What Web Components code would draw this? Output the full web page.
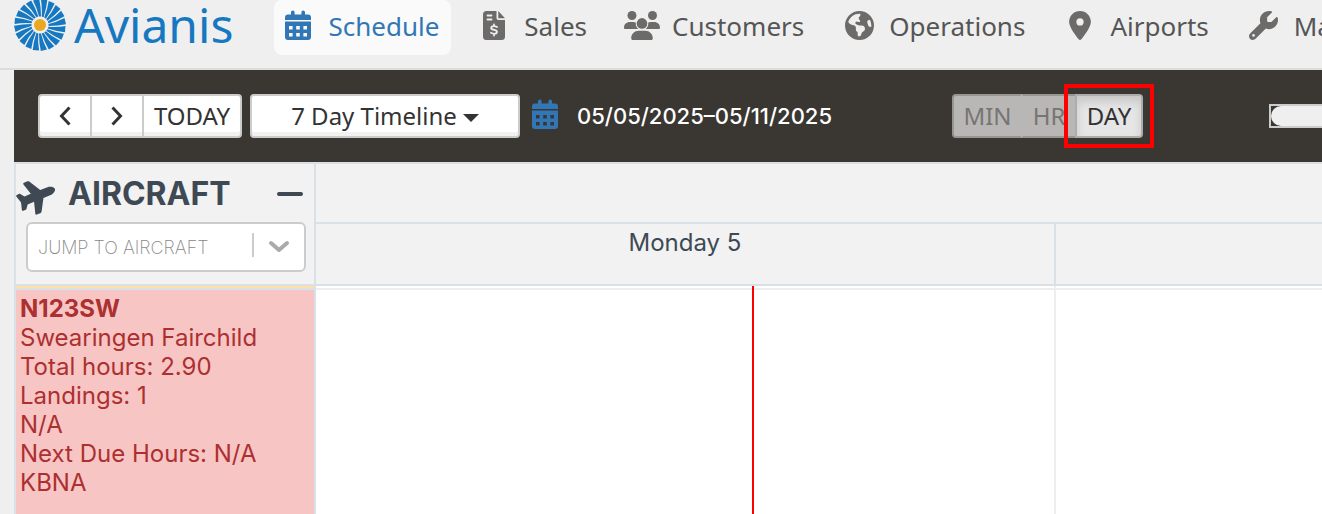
<!DOCTYPE html>
<html lang="en">
<head>
<meta charset="utf-8">
<meta name="viewport" content="width=device-width, initial-scale=1">
<title>Avianis Schedule</title>
<style>
html, body { margin: 0; height: 100%; overflow: hidden; background: #efefef; }
body { font-family: "Noto Sans", "Open Sans", sans-serif; font-size: 24px; color: #333; }
</style>
</head>
<body>
<av-app></av-app>

<script>
const define = (name, html, setup) => customElements.define(name, class extends HTMLElement {
  connectedCallback() {
    if (this.shadowRoot) return;
    const template = document.createElement('template');
    template.innerHTML = html;
    this.attachShadow({ mode: 'open' }).append(template.content.cloneNode(true));
    if (setup) setup(this, this.shadowRoot);
  }
});

const ICONS = {
  calendar: ['0 0 26 29', '<path fill-rule="evenodd" d="M6 1.300a1.300 1.300 0 0 1 3.600 0V3.500h6.800V1.300a1.300 1.300 0 0 1 3.600 0V3.500h3a3 3 0 0 1 3 3V9H0V6.500a3 3 0 0 1 3-3h3zM0 10.500h26V26a3 3 0 0 1-3 3H3a3 3 0 0 1-3-3zM4 15v3.400h3.600V15zm7.200 0v3.400h3.600V15zm7.200 0v3.400H22V15zM4 22v3.400h3.600V22zm7.200 0v3.400h3.600V22zm7.200 0v3.400H22V22z"/>'],
  sales: ['0 0 22 29', '<path fill-rule="evenodd" d="M3.500 0H13.500V7a2 2 0 0 0 2 2H22V25.500a3.500 3.500 0 0 1-3.500 3.500h-15A3.500 3.500 0 0 1 0 25.500v-22A3.500 3.500 0 0 1 3.500 0zM4.500 3.600a.9.9 0 0 0 0 1.800h4a.9.9 0 0 0 0-1.800zm0 4a.9.9 0 0 0 0 1.800h4a.9.9 0 0 0 0-1.800zM15.300 0 22 7.200h-6.700z"/><path fill="none" stroke="#efefef" stroke-width="1.800" stroke-linecap="round" d="M14 16c-1-.6-2-.9-3-.9-3.400 0-3.700 2.700-.8 3.500l1.800.5c3 .9 2.400 3.700-.7 3.700-1.200 0-2.500-.5-3.300-1M11 13.500v1.500m0 8v1.600"/>'],
  users: ['0 0 36 29', '<circle cx="8" cy="4.500" r="4.500"/><circle cx="28.500" cy="4.500" r="4.500"/><circle cx="18" cy="12.400" r="5.300"/><path d="M0 16.700C0 13.200 2.700 11 5.700 11h3.600c.9 0 1.700.2 2.500.5-.3 2.600.7 5 2.500 6.500H1.200C.5 18 0 17.500 0 16.700zM36 16.700C36 13.200 33.300 11 30.300 11h-3.600c-.9 0-1.700.2-2.500.5.300 2.600-.7 5-2.500 6.500h13.100c.7 0 1.200-.5 1.200-1.300zM7.200 27.200C7.200 23 10.500 19.700 14.700 19.700h6.600c4.200 0 7.500 3.300 7.500 7.500 0 1-.7 1.800-1.700 1.800H8.900c-1 0-1.700-.8-1.700-1.800z"/>'],
  globe: ['0 0 512 512', '<path fill-rule="evenodd" d="M57.700 193l9.400 16.400c8.300 14.500 21.900 25.200 38 29.800L163 255.700c17.200 4.900 29 20.600 29 38.500v39.900c0 11 6.200 21 16 25.900s16 14.900 16 25.900v39c0 15.600 14.900 26.900 29.900 22.600c16.100-4.600 28.600-17.500 32.700-33.800l2.800-11.200c4.200-16.900 15.200-31.400 30.300-40l8.100-4.600c15-8.500 24.200-24.500 24.200-41.700v-8.300c0-12.700-5.100-24.900-14.100-33.900l-3.900-3.900c-9-9-21.200-14.100-33.900-14.100H257c-11.100 0-22.100-2.900-31.800-8.400l-34.500-19.700c-4.300-2.500-7.600-6.500-9.200-11.200c-3.200-9.600 1.100-20 10.200-24.500l5.900-3c6.600-3.300 14.300-3.900 21.300-1.500l23.200 7.700c8.200 2.700 17.200-.4 21.900-7.500c4.700-7 4.200-16.300-1.200-22.800l-13.600-16.300c-10-12-9.900-29.500 .3-41.300l15.700-18.300c8.800-10.300 10.200-25 3.500-36.700l-2.400-4.200c-3.500-.2-6.900-.3-10.400-.3C163.100 48 84.400 108.900 57.700 193zM464 256c0-36.800-9.600-71.400-26.400-101.500L412 164.800c-15.700 6.300-23.800 23.800-18.500 39.800l16.900 50.700c3.500 10.400 12 18.300 22.600 20.900l29.100 7.300c1.200-9 1.800-18.200 1.800-27.500zM0 256a256 256 0 1 1 512 0A256 256 0 1 1 0 256z"/>'],
  pin: ['0 0 384 512', '<path fill-rule="evenodd" d="M215.700 499.200C267 435 384 279.400 384 192C384 86 298 0 192 0S0 86 0 192c0 87.400 117 243 168.300 307.200c12.300 15.300 35.100 15.300 47.400 0zM192 128a64 64 0 1 1 0 128 64 64 0 1 1 0-128z"/>'],
  wrench: ['0 0 512 512', '<path fill-rule="evenodd" d="M352 320c88.400 0 160-71.600 160-160c0-15.300-2.200-30.100-6.200-44.200c-3.100-10.800-16.400-13.200-24.300-5.300l-76.800 76.800c-3 3-7.100 4.700-11.300 4.700L336 192c-8.800 0-16-7.200-16-16l0-57.400c0-4.200 1.700-8.300 4.700-11.300l76.800-76.800c7.900-7.900 5.400-21.200-5.300-24.300C382.100 2.200 367.300 0 352 0C263.600 0 192 71.600 192 160c0 19.100 3.400 37.500 9.500 54.500L19.900 396.100C7.200 408.800 0 426.100 0 444.100C0 481.600 30.400 512 67.900 512c18 0 35.300-7.200 48-19.900L297.500 310.500c17 6.200 35.400 9.500 54.500 9.500zM80 408a24 24 0 1 1 0 48 24 24 0 1 1 0-48z"/>'],
  plane: ['-10 -10 596 532', '<path transform="rotate(-22 288 256)" d="M482.300 192c34.200 0 93.700 29 93.700 64c0 36-59.500 64-93.700 64l-116.600 0L265.200 495.900c-5.700 10-16.300 16.100-27.800 16.100l-56.200 0c-10.600 0-18.300-10.200-15.400-20.400l49-171.600L112 320 68.800 377.600c-3 4-7.800 6.400-12.800 6.400l-42 0c-7.800 0-14-6.300-14-14c0-1.300 .2-2.600 .5-3.900L32 256 .5 145.900c-.4-1.300-.5-2.600-.5-3.900c0-7.800 6.300-14 14-14l42 0c5 0 9.800 2.400 12.800 6.400L112 192l102.900 0-49-171.600C162.900 10.200 170.600 0 181.200 0l56.200 0c11.500 0 22.100 6.200 27.800 16.100L365.700 192l116.600 0z"/>'],
  prev: ['0 0 12 20', '<path fill="none" stroke="currentColor" stroke-width="3" d="M10.500 1.500 2.500 10l8 8.500"/>'],
  next: ['0 0 12 20', '<path fill="none" stroke="currentColor" stroke-width="3" d="M1.500 1.500 9.500 10l-8 8.500"/>'],
  down: ['0 0 20 12', '<path fill="none" stroke="currentColor" stroke-width="4" stroke-linecap="round" stroke-linejoin="round" d="m2 2 8 7 8-7"/>'],
  minus: ['0 0 26 4', '<rect width="26" height="4" rx="2"/>'],
  caret: ['0 0 16 8', '<path d="M0 0h16L8 8z"/>']
};

define('av-icon', `<style>
:host { display: inline-flex; flex: none; }
svg { display: block; width: 100%; height: 100%; fill: currentColor; overflow: visible; }
</style><svg aria-hidden="true"></svg>`, (host, root) => {
  const [box, shape] = ICONS[host.getAttribute('name')];
  const svg = root.querySelector('svg');
  svg.setAttribute('viewBox', box);
  svg.innerHTML = shape;
  host.style.width = host.getAttribute('w') + 'px';
  host.style.height = host.getAttribute('h') + 'px';
});

define('av-logo', `<style>
:host { display: block; flex: none; }
a { display: flex; align-items: center; gap: 8px; height: 50px; color: #1778c2; text-decoration: none; font: 48px/48px "Noto Sans", sans-serif; }
svg { width: 52px; height: 52px; }
</style><a href="#"><svg viewBox="-26 -26 52 52" aria-hidden="true"><g fill="#1778c2"></g><circle r="6" fill="#e9a820"/></svg><span>Avianis</span></a>`, (host, root) => {
  root.querySelector('g').innerHTML = Array.from({ length: 20 }, (_, i) =>
    `<path transform="rotate(${i * 18})" d="M8.500 -1Q17 -3 24.500 -7L26 -.8Q18 1 8.500 1z"/>`).join('');
});

define('av-nav-item', `<style>
:host { display: block; flex: none; }
a { display: flex; align-items: center; gap: 12px; height: 55px; padding: 0 12px 4px 6px; box-sizing: border-box; border-radius: 8px; color: #555; font-size: 26px; line-height: 36px; text-decoration: none; white-space: nowrap; }
.icon { display: flex; justify-content: center; width: 36px; color: #6d6b69; }
:host([active]) a { background: #fafafa; color: #3277b5; }
:host([active]) .icon { color: #3277b5; }
</style><a href="#"><span class="icon"><slot name="icon"></slot></span><slot></slot></a>`);

define('av-header', `<style>
:host { display: flex; gap: 41px; height: 70px; box-sizing: border-box; padding-left: 14px; border-bottom: 2px solid #ddd; background: #efefef; overflow: hidden; }
nav { display: flex; gap: 19px; flex: 1; min-width: 0; }
</style>
<av-logo></av-logo>
<nav aria-label="Main">
<av-nav-item active><av-icon slot="icon" name="calendar" w="26" h="29"></av-icon>Schedule</av-nav-item>
<av-nav-item><av-icon slot="icon" name="sales" w="22" h="29"></av-icon>Sales</av-nav-item>
<av-nav-item><av-icon slot="icon" name="users" w="36" h="29"></av-icon>Customers</av-nav-item>
<av-nav-item><av-icon slot="icon" name="globe" w="29" h="29"></av-icon>Operations</av-nav-item>
<av-nav-item><av-icon slot="icon" name="pin" w="22" h="29"></av-icon>Airports</av-nav-item>
<av-nav-item><av-icon slot="icon" name="wrench" w="29" h="29"></av-icon>Maintenance</av-nav-item>
</nav>`);

define('av-toolbar', `<style>
:host { display: flex; align-items: center; height: 92px; padding-left: 24px; background: #3a3632; color: #fff; overflow: hidden; }
button { display: flex; align-items: center; justify-content: center; gap: 6px; flex: none; height: 44px; margin: 0; padding: 0 10px; box-sizing: border-box; border: 2px solid #ccc; background: #fff; box-shadow: inset 0 -4px #f1f1f1; color: #333; font: 24px/40px "Noto Sans", sans-serif; white-space: nowrap; }
.group { display: flex; flex: none; }
.group button + button { margin-left: -2px; }
.group button:first-child { border-radius: 4px 0 0 4px; }
.group button:last-of-type { border-radius: 0 4px 4px 0; }
.step { width: 54px; }
.today { width: 100px; }
.range { width: 270px; margin-left: 8px; border-radius: 4px; }
.range av-icon { margin-top: 4px; }
.pick { width: 26px; margin: 0 0 3px 12px; padding: 0; border: 0; background: none; box-shadow: none; color: #3277b5; }
time { margin-left: 19px; flex: none; font: 500 22px/30px Inter, sans-serif; white-space: nowrap; }
.zoom { position: relative; margin-left: 120px; }
.zoom button { border-color: #989694; background: #b9b7b5; box-shadow: none; color: #777573; }
.zoom .min { width: 71px; }
.zoom .hr { width: 56px; border-left-color: #b9b7b5; }
.zoom .day { width: 68px; border-color: #adadad; background: #e6e6e6; box-shadow: inset 0 6px 10px #c8c8c8; color: #333; }
.focus { position: absolute; top: -10px; right: -11px; width: 90px; height: 64px; box-sizing: border-box; border: 4px solid #f00; pointer-events: none; }
.track { flex: 1; min-width: 0; height: 24px; margin-left: 126px; box-sizing: border-box; border: 2px solid #ccc; border-right: 0; }
.track i { display: block; height: 20px; border-radius: 10px 0 0 10px; background: #efefef; }
</style>
<div class="group">
<button class="step" aria-label="Previous"><av-icon name="prev" w="12" h="20"></av-icon></button>
<button class="step" aria-label="Next"><av-icon name="next" w="12" h="20"></av-icon></button>
<button class="today">TODAY</button>
</div>
<button class="range" aria-haspopup="true">7 Day Timeline<av-icon name="caret" w="16" h="8"></av-icon></button>
<button class="pick" aria-label="Pick dates"><av-icon name="calendar" w="26" h="29"></av-icon></button>
<time>05/05/2025–05/11/2025</time>
<div class="group zoom">
<button class="min" disabled>MIN</button><button class="hr" disabled>HR</button><button class="day">DAY</button>
<span class="focus"></span>
</div>
<div class="track"><i></i></div>`);

define('av-jump', `<style>
:host { display: flex; align-items: center; height: 50px; margin: 0 8px 0 10px; box-sizing: border-box; border: 2px solid #ccc; border-radius: 6px; background: #fff; }
input { flex: 1; min-width: 0; height: 40px; padding: 0 0 0 10px; border: 0; outline: 0; background: none; font: 200 18px/24px Inter, sans-serif; color: #333; }
input::placeholder { color: #888; opacity: 1; }
i { width: 2px; height: 24px; margin-bottom: 5px; background: #ccc; }
button { display: flex; padding: 0 15px; border: 0; background: none; color: #aaa; }
</style><input type="text" placeholder="JUMP TO AIRCRAFT" aria-label="Jump to aircraft"><i></i><button aria-label="Open list"><av-icon name="down" w="20" h="12"></av-icon></button>`);

define('av-aircraft', `<style>
:host { display: block; padding: 4px 4px 0; background: #f8c5c5; color: #ac3030; font: 24px/29px Inter, sans-serif; white-space: nowrap; }
h3 { margin: 0; font: inherit; font-weight: 700; }
</style><h3><slot name="tail"></slot></h3><slot></slot>`);

define('av-timeline', `<style>
:host { --line: #dae1e6; display: grid; grid-template-columns: 302px minmax(0, 1fr); grid-template-rows: 124px 1fr; flex: 1; min-height: 0; background: #fff; font-family: Inter, sans-serif; color: #3e4954; }
.head, .days { box-sizing: border-box; border-top: 2px solid var(--line); border-bottom: 2px solid var(--line); background: #f2f2f2; }
.head, .side { box-sizing: border-box; border-left: 2px solid var(--line); border-right: 2px solid var(--line); }
.title { display: flex; align-items: center; height: 58px; padding: 2px 11px 0 1px; box-sizing: border-box; }
.title > av-icon { margin-top: 4px; }
h2 { flex: 1; margin: 0; padding-left: 11px; font: 700 32px/40px Inter, sans-serif; }
.title button { display: flex; padding: 0; border: 0; background: none; color: inherit; }
.days { display: grid; grid-template-rows: 58px 1fr; }
.row { display: flex; border-top: 2px solid var(--line); overflow: hidden; }
.day { flex: none; width: 740px; box-sizing: border-box; border-right: 2px solid var(--line); font-size: 24px; line-height: 38px; text-align: center; }
.side { display: grid; grid-template-rows: 4px 1fr; }
.mark { border-bottom: 2px solid var(--line); background: #ffe0a6; }
.lanes { position: relative; display: flex; overflow: hidden; }
.lane { flex: none; width: 740px; box-sizing: border-box; border-right: 2px solid #eee; }
.rule { position: absolute; top: 2px; left: 0; right: 0; height: 2px; background: #eee; }
.now { position: absolute; top: 0; bottom: 0; left: 436px; width: 2px; background: #f00; }
</style>
<section class="head">
<div class="title"><av-icon name="plane" w="40" h="36"></av-icon><h2>AIRCRAFT</h2><button aria-label="Collapse"><av-icon name="minus" w="26" h="4"></av-icon></button></div>
<av-jump></av-jump>
</section>
<section class="days"><div></div><div class="row"><div class="day">Monday 5</div></div></section>
<section class="side"><div class="mark"></div>
<av-aircraft><span slot="tail">N123SW</span>
<div>Swearingen Fairchild</div><div>Total hours: 2.90</div><div>Landings: 1</div><div>N/A</div><div>Next Due Hours: N/A</div><div>KBNA</div>
</av-aircraft></section>
<section class="lanes"><div class="lane"></div><div class="rule"></div><div class="now"></div></section>`);

define('av-app', `<style>
:host { display: flex; flex-direction: column; height: 100%; }
main { display: flex; flex-direction: column; flex: 1; min-height: 0; margin-left: 14px; }
</style><av-header></av-header><main><av-toolbar></av-toolbar><av-timeline></av-timeline></main>`);
</script>
</body>
</html>
